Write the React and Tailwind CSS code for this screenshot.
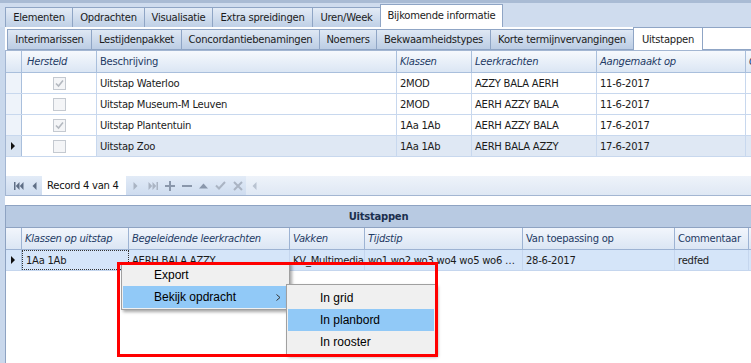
import React from "react";

const mainTabs = [
  { label: "Elementen", w: "w-[67px]" },
  { label: "Opdrachten", w: "w-[72px]" },
  { label: "Visualisatie", w: "w-[68px]" },
  { label: "Extra spreidingen", w: "w-[100px]" },
  { label: "Uren/Week", w: "w-[68px]" },
];

const subTabs = [
  { label: "Interimarissen", w: "w-[84px]" },
  { label: "Lestijdenpakket", w: "w-[90px]" },
  { label: "Concordantiebenamingen", w: "w-[138px]" },
  { label: "Noemers", w: "w-[57px]" },
  { label: "Bekwaamheidstypes", w: "w-[114px]" },
  { label: "Korte termijnvervangingen", w: "w-[143px]" },
];

const rows = [
  { checked: true, desc: "Uitstap Waterloo", klassen: "2MOD", lk: "AZZY BALA AERH", date: "11-6-2017" },
  { checked: false, desc: "Uitstap Museum-M Leuven", klassen: "2MOD", lk: "AERH AZZY BALA", date: "11-6-2017" },
  { checked: true, desc: "Uitstap Plantentuin", klassen: "1Aa 1Ab", lk: "AERH AZZY BALA", date: "17-6-2017" },
  { checked: false, desc: "Uitstap Zoo", klassen: "1Aa 1Ab", lk: "AERH BALA AZZY", date: "17-6-2017", current: true },
];

const RowArrow = () => (
  <svg width="5" height="8" viewBox="0 0 5 8">
    <path d="M0 0 L4 4 L0 8 Z" fill="#111" />
  </svg>
);

const Checkbox = ({ checked }) => (
  <div className="w-[13px] h-[13px] border border-[#c4c9d0] bg-[#f4f5f7] flex items-center justify-center">
    {checked && (
      <svg width="9" height="9" viewBox="0 0 9 9">
        <path d="M1 4.5 L3.5 7 L8 1.5" fill="none" stroke="#b3b8bf" strokeWidth="1.6" />
      </svg>
    )}
  </div>
);

// navigator icons, drawn small and grey like the devexpress navigator
const NavIcon = ({ kind, color }) => {
  const c = color;
  switch (kind) {
    case "first":
      return (
        <svg width="10" height="8" viewBox="0 0 10 8">
          <rect x="0" y="0" width="1.5" height="8" fill={c} />
          <path d="M5.5 0 L1.8 4 L5.5 8 Z M9.5 0 L5.8 4 L9.5 8 Z" fill={c} />
        </svg>
      );
    case "prev":
      return (
        <svg width="5" height="8" viewBox="0 0 5 8">
          <path d="M4.5 0 L0.5 4 L4.5 8 Z" fill={c} />
        </svg>
      );
    case "next":
      return (
        <svg width="5" height="8" viewBox="0 0 5 8">
          <path d="M0.5 0 L4.5 4 L0.5 8 Z" fill={c} />
        </svg>
      );
    case "last":
      return (
        <svg width="10" height="8" viewBox="0 0 10 8">
          <path d="M0.5 0 L4.2 4 L0.5 8 Z M4.5 0 L8.2 4 L4.5 8 Z" fill={c} />
          <rect x="8.5" y="0" width="1.5" height="8" fill={c} />
        </svg>
      );
    case "plus":
      return (
        <svg width="10" height="10" viewBox="0 0 10 10">
          <path d="M4 0 H6 V4 H10 V6 H6 V10 H4 V6 H0 V4 H4 Z" fill={c} />
        </svg>
      );
    case "minus":
      return (
        <svg width="10" height="10" viewBox="0 0 10 10">
          <rect x="0" y="4" width="10" height="2" fill={c} />
        </svg>
      );
    case "up":
      return (
        <svg width="9" height="6" viewBox="0 0 9 6">
          <path d="M0 5.5 L4.5 0.5 L9 5.5 Z" fill={c} />
        </svg>
      );
    case "check":
      return (
        <svg width="11" height="9" viewBox="0 0 11 9">
          <path d="M1 4.5 L4 7.5 L10 1" fill="none" stroke={c} strokeWidth="2" />
        </svg>
      );
    case "cross":
      return (
        <svg width="10" height="10" viewBox="0 0 10 10">
          <path d="M1 1 L9 9 M9 1 L1 9" fill="none" stroke={c} strokeWidth="2" />
        </svg>
      );
    default:
      return null;
  }
};

export default function App() {
  return (
    <div className="w-[751px] h-[363px] overflow-hidden relative bg-[#c9d8ec] font-['DejaVu_Sans',sans-serif] text-[10px] tracking-[-0.25px] text-[#1b1b1b]">
      <div className="h-[3px] bg-[#a9bbd4]" />

      {/* Main tab strip */}
      <div className="h-[24px] flex items-end pl-[5px] bg-[#cfdcee]">
        {mainTabs.map((t) => (
          <div
            key={t.label}
            className={`${t.w} h-[20px] flex items-center justify-center border-t border-l border-[#8fa5c5] bg-gradient-to-b from-[#e3ebf6] to-[#bfd0e6] whitespace-nowrap`}
          >
            {t.label}
          </div>
        ))}
        <div className="w-[123px] h-[23px] flex items-center justify-center border-t border-l border-r border-[#8fa5c5] bg-white whitespace-nowrap pb-[2px]">
          Bijkomende informatie
        </div>
      </div>

      {/* Tab page */}
      <div className="ml-[5px] h-[336px] bg-white flex flex-col">
        {/* Sub tab strip */}
        <div className="h-[23px] flex items-end pl-[2px]">
          {subTabs.map((t) => (
            <div
              key={t.label}
              className={`${t.w} h-[21px] flex items-center justify-center border-t border-l border-b border-[#8fa5c5] bg-gradient-to-b from-[#dfe8f4] to-[#bccde4] whitespace-nowrap`}
            >
              {t.label}
            </div>
          ))}
          <div className="w-[70px] h-[23px] flex items-center justify-center border-t border-l border-r border-[#8fa5c5] bg-white whitespace-nowrap">
            Uitstappen
          </div>
          <div className="flex-1 h-[23px] border-t border-b border-[#8fa5c5] bg-white" />
        </div>

        {/* Grid 1 */}
        <div className="h-[146px] border-t border-l border-b border-[#a3b6d2] flex flex-col">
          <div className="h-[22px] shrink-0 flex border-b border-[#a9bfdc] bg-gradient-to-b from-[#f6f9fd] to-[#dbe6f4] text-[#1e3a64]">
            <div className="w-[16px] shrink-0 border-r border-[#a9bfdc]" />
            <div className="w-[75px] shrink-0 border-r border-[#a9bfdc] pl-[5px] flex items-center italic">Hersteld</div>
            <div className="w-[300px] shrink-0 border-r border-[#a9bfdc] pl-[3px] flex items-center">Beschrijving</div>
            <div className="w-[75px] shrink-0 border-r border-[#a9bfdc] pl-[3px] flex items-center italic">Klassen</div>
            <div className="w-[125px] shrink-0 border-r border-[#a9bfdc] pl-[3px] flex items-center italic">Leerkrachten</div>
            <div className="w-[149px] shrink-0 border-r border-[#a9bfdc] pl-[3px] flex items-center italic">Aangemaakt op</div>
            <div className="flex-1 pl-[3px] flex items-center italic">C</div>
          </div>
          {rows.map((r) => (
            <div key={r.desc} className="h-[21px] shrink-0 flex border-b border-[#c8d8ee] whitespace-nowrap">
              <div
                className={`w-[16px] shrink-0 border-r border-[#a9bfdc] flex items-center justify-center ${
                  r.current ? "bg-[#d9e4f2]" : "bg-[#eef3fa]"
                }`}
              >
                {r.current && <RowArrow />}
              </div>
              <div className="w-[75px] shrink-0 border-r border-[#c8d8ee] flex items-center justify-center">
                <Checkbox checked={r.checked} />
              </div>
              <div className={`w-[300px] shrink-0 border-r border-[#c8d8ee] pl-[3px] flex items-center ${r.current ? "bg-[#dfe8f4]" : ""}`}>
                {r.desc}
              </div>
              <div className={`w-[75px] shrink-0 border-r border-[#c8d8ee] pl-[3px] flex items-center ${r.current ? "bg-[#dfe8f4]" : ""}`}>
                {r.klassen}
              </div>
              <div className={`w-[125px] shrink-0 border-r border-[#c8d8ee] pl-[3px] flex items-center ${r.current ? "bg-[#dfe8f4]" : ""}`}>
                {r.lk}
              </div>
              <div className={`w-[149px] shrink-0 border-r border-[#c8d8ee] pl-[3px] flex items-center ${r.current ? "bg-[#dfe8f4]" : ""}`}>
                {r.date}
              </div>
              <div className={`flex-1 ${r.current ? "bg-[#dfe8f4]" : ""}`} />
            </div>
          ))}
          <div className="flex-1" />
          {/* Navigator */}
          <div className="h-[19px] shrink-0 flex items-stretch bg-gradient-to-b from-[#e2ebf7] to-[#cedcef]">
            <div className="w-[20px] flex items-center justify-end pr-[2px]">
              <NavIcon kind="first" color="#5f6e85" />
            </div>
            <div className="w-[16px] flex items-center justify-center">
              <NavIcon kind="prev" color="#5f6e85" />
            </div>
            <div className="w-[84px] bg-white flex items-center pl-[5px] whitespace-nowrap text-[#111]">
              Record 4 van 4
            </div>
            <div className="w-[18px] flex items-center justify-center">
              <NavIcon kind="next" color="#aab4c3" />
            </div>
            <div className="w-[17px] flex items-center justify-center">
              <NavIcon kind="last" color="#aab4c3" />
            </div>
            <div className="w-[17px] flex items-center justify-center">
              <NavIcon kind="plus" color="#8a97ab" />
            </div>
            <div className="w-[17px] flex items-center justify-center">
              <NavIcon kind="minus" color="#8a97ab" />
            </div>
            <div className="w-[17px] flex items-center justify-center">
              <NavIcon kind="up" color="#8a97ab" />
            </div>
            <div className="w-[17px] flex items-center justify-center">
              <NavIcon kind="check" color="#aab4c3" />
            </div>
            <div className="w-[17px] flex items-center justify-center">
              <NavIcon kind="cross" color="#aab4c3" />
            </div>
            <div className="flex-1 flex items-center pl-[6px] bg-gradient-to-b from-[#eef3fa] to-[#dfe8f4]">
              <NavIcon kind="prev" color="#b9c3d1" />
            </div>
          </div>
        </div>

        <div className="h-[9px]" />

        {/* Grid 2: Uitstappen */}
        <div className="flex-1 border-l border-t border-[#8ea3c2] flex flex-col">
          <div className="h-[22px] border-b border-[#8ea3c2] bg-[#b8cae2] flex items-center justify-center font-bold text-[#1b2f4d]">
            Uitstappen
          </div>
          <div className="h-[22px] flex border-b border-[#9db3d3] bg-gradient-to-b from-[#f2f6fc] to-[#dbe6f4] text-[#1e3a64] whitespace-nowrap">
            <div className="w-[16px] shrink-0 border-r border-[#9db3d3]" />
            <div className="w-[107px] shrink-0 border-r border-[#9db3d3] pl-[3px] flex items-center italic">Klassen op uitstap</div>
            <div className="w-[161px] shrink-0 border-r border-[#9db3d3] pl-[3px] flex items-center italic">Begeleidende leerkrachten</div>
            <div className="w-[75px] shrink-0 border-r border-[#9db3d3] pl-[3px] flex items-center italic">Vakken</div>
            <div className="w-[158px] shrink-0 border-r border-[#9db3d3] pl-[3px] flex items-center italic">Tijdstip</div>
            <div className="w-[152px] shrink-0 border-r border-[#9db3d3] pl-[3px] flex items-center">Van toepassing op</div>
            <div className="w-[74px] shrink-0 border-r border-[#9db3d3] pl-[3px] flex items-center">Commentaar</div>
            <div className="flex-1" />
          </div>
          <div className="h-[21px] flex border-b border-[#c5d6ee] bg-[#d5e5f9] whitespace-nowrap">
            <div className="w-[16px] shrink-0 border-r border-[#a9bfdc] flex items-center justify-center">
              <RowArrow />
            </div>
            <div className="w-[107px] shrink-0 border border-dotted border-[#333] pl-[3px] flex items-center">1Aa 1Ab</div>
            <div className="w-[161px] shrink-0 border-r border-[#c5d6ee] pl-[3px] flex items-center">AERH BALA AZZY</div>
            <div className="w-[75px] shrink-0 border-r border-[#c5d6ee] pl-[3px] flex items-center overflow-hidden">KV_Multimedia</div>
            <div className="w-[158px] shrink-0 border-r border-[#c5d6ee] pl-[3px] flex items-center">wo1 wo2 wo3 wo4 wo5 wo6 …</div>
            <div className="w-[152px] shrink-0 border-r border-[#c5d6ee] pl-[3px] flex items-center">28-6-2017</div>
            <div className="w-[74px] shrink-0 border-r border-[#c5d6ee] pl-[3px] flex items-center">redfed</div>
            <div className="flex-1" />
          </div>
          <div className="flex-1" />
        </div>
      </div>

      {/* Context menu */}
      <div className="absolute left-[121px] top-[262px] w-[169px] h-[48px] bg-[#f0f0f0] border border-[#a0a0a0] shadow-[2px_2px_3px_rgba(0,0,0,0.35)] font-['Liberation_Sans',sans-serif] text-[12px] tracking-normal text-black">
        <div className="h-[22px] mt-[1px] flex items-center pl-[32px]">Export</div>
        <div className="h-[22px] mx-px flex items-center pl-[31px] bg-[#91c9f7] relative">
          Bekijk opdracht
          <svg className="absolute left-[153px] top-[8px]" width="5" height="7" viewBox="0 0 5 7">
            <path d="M0.5 0.5 L4 3.5 L0.5 6.5" fill="none" stroke="#333" strokeWidth="1" />
          </svg>
        </div>
      </div>
      <div className="absolute left-[286px] top-[284px] w-[150px] h-[71px] bg-[#f0f0f0] border border-[#a0a0a0] shadow-[2px_2px_3px_rgba(0,0,0,0.35)] font-['Liberation_Sans',sans-serif] text-[12px] tracking-normal text-black py-[2px]">
        <div className="h-[22px] flex items-center pl-[33px]">In grid</div>
        <div className="h-[22px] mx-px flex items-center pl-[32px] bg-[#91c9f7]">In planbord</div>
        <div className="h-[22px] flex items-center pl-[33px]">In rooster</div>
      </div>
      {/* red highlight frame */}
      <div className="absolute left-[117px] top-[262px] w-[321px] h-[95px] border-[3px] border-[#ff0000]" />
    </div>
  );
}
